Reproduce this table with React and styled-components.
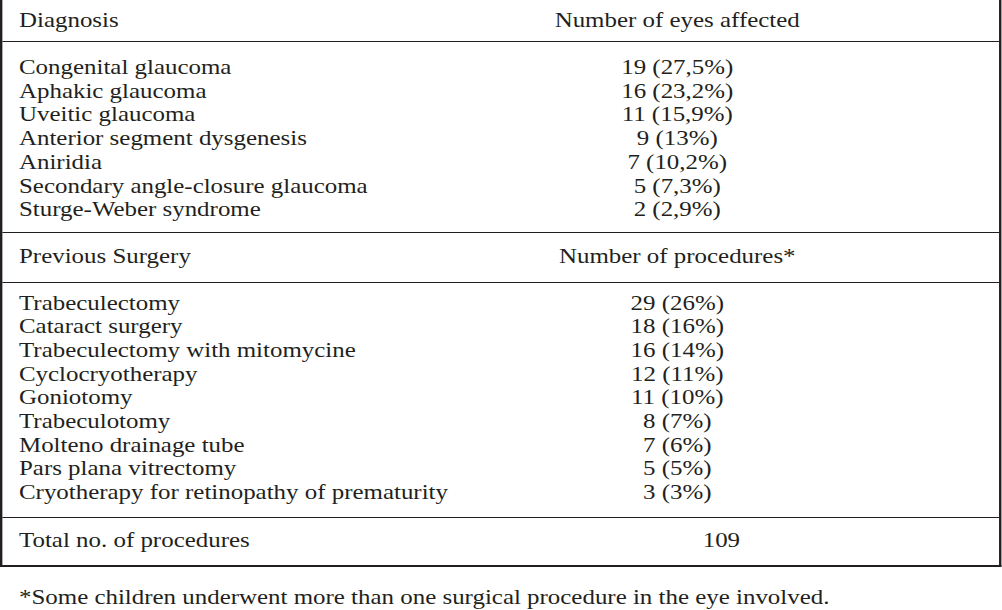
import React from "react";
import styled, { createGlobalStyle } from "styled-components";

const Global = createGlobalStyle`
  html, body { margin: 0; padding: 0; background: #ffffff; }
  body { overflow: hidden; }
`;

const INK = "#231f20";

/* The printed table has wide, horizontally stretched type; the page is
   laid out at its natural width and stretched horizontally as a whole. */
const Page = styled.div`
  width: 844px;
  transform: scaleX(1.1865);
  transform-origin: 0 0;
  font-family: "Liberation Serif", "Times New Roman", serif;
  font-size: 21px;
  line-height: 23.7px;
  color: ${INK};
`;

const Table = styled.div`
  border-left: 2px solid ${INK};
  border-right: 2px solid ${INK};
  border-bottom: 2px solid ${INK};
`;

const Block = styled.div`
  padding: ${(p) => p.$pt}px 0 ${(p) => p.$pb}px 14px;
  border-bottom: ${(p) => (p.$last ? "none" : `1px solid ${INK}`)};
`;

const Row = styled.div`
  display: grid;
  grid-template-columns: 420px ${(p) => p.$valueWidth || 269.6}px;
  white-space: nowrap;
`;

const Label = styled.div``;

const Value = styled.div`
  text-align: center;
`;

const Footnote = styled.p`
  margin: 18.8px 0 0 16px;
  white-space: nowrap;
`;

const diagnoses = [
  ["Congenital glaucoma", "19 (27,5%)"],
  ["Aphakic glaucoma", "16 (23,2%)"],
  ["Uveitic glaucoma", "11 (15,9%)"],
  ["Anterior segment dysgenesis", "9 (13%)"],
  ["Aniridia", "7 (10,2%)"],
  ["Secondary angle-closure glaucoma", "5 (7,3%)"],
  ["Sturge-Weber syndrome", "2 (2,9%)"],
];

const surgeries = [
  ["Trabeculectomy", "29 (26%)"],
  ["Cataract surgery", "18 (16%)"],
  ["Trabeculectomy with mitomycine", "16 (14%)"],
  ["Cyclocryotherapy", "12 (11%)"],
  ["Goniotomy", "11 (10%)"],
  ["Trabeculotomy", "8 (7%)"],
  ["Molteno drainage tube", "7 (6%)"],
  ["Pars plana vitrectomy", "5 (5%)"],
  ["Cryotherapy for retinopathy of prematurity", "3 (3%)"],
];

const Rows = ({ items }) =>
  items.map(([label, value]) => (
    <Row key={label}>
      <Label>{label}</Label>
      <Value>{value}</Value>
    </Row>
  ));

export default function App() {
  return (
    <>
      <Global />
      <Page>
        <Table>
          <Block $pt={8.8} $pb={8.5}>
            <Row>
              <Label>Diagnosis</Label>
              <Value>Number of eyes affected</Value>
            </Row>
          </Block>
          <Block $pt={14} $pb={9.6}>
            <Rows items={diagnoses} />
          </Block>
          <Block $pt={12.5} $pb={13.3}>
            <Row>
              <Label>Previous Surgery</Label>
              <Value>Number of procedures*</Value>
            </Row>
          </Block>
          <Block $pt={8.5} $pb={12.2}>
            <Rows items={surgeries} />
          </Block>
          <Block $pt={10.5} $pb={12.8} $last>
            <Row $valueWidth={344}>
              <Label>Total no. of procedures</Label>
              <Value>109</Value>
            </Row>
          </Block>
        </Table>
        <Footnote>
          *Some children underwent more than one surgical procedure in the eye involved.
        </Footnote>
      </Page>
    </>
  );
}
